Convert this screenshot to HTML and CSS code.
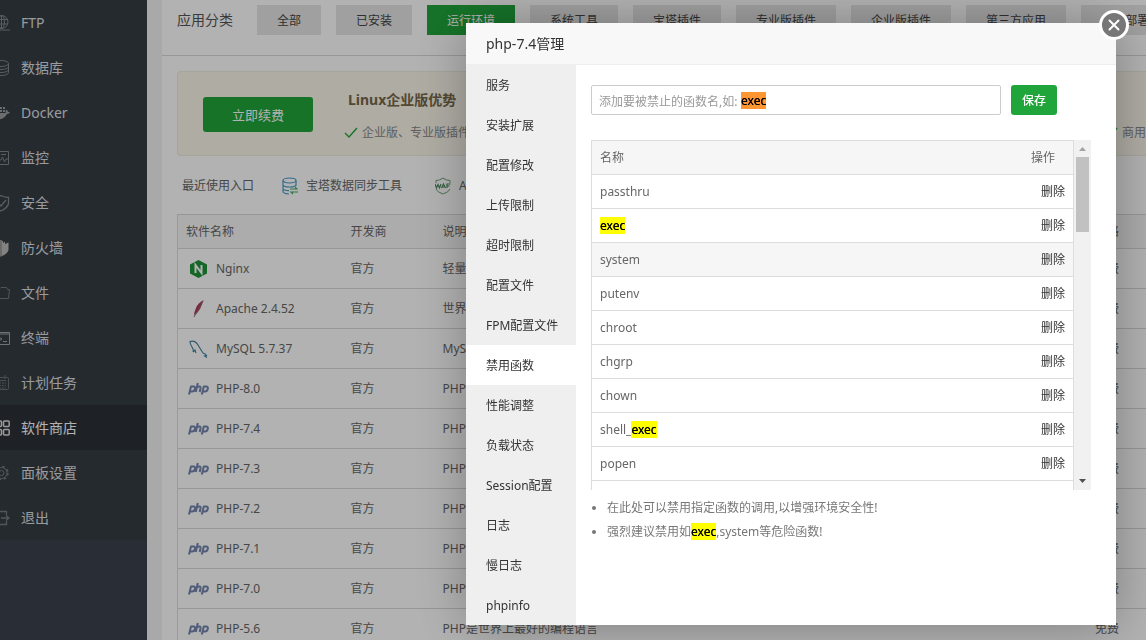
FILE: index.html
```html
<!DOCTYPE html>
<html lang="zh-CN">
<head>
<meta charset="utf-8">
<title>软件商店</title>
<link rel="stylesheet" href="styles.css">
</head>
<body>
<svg class="defs" aria-hidden="true">
  <symbol id="php" viewBox="0 0 21 12">
    <g fill="none" stroke="#7385ae" stroke-width="2" stroke-linejoin="round">
      <path d="M1 11.500L3 3.500H5.500Q7.500 3.500 7 5.800Q6.500 8.500 4 8.500H2"/>
      <path d="M9.800 0L7.800 9M9 4Q13 2.500 12.600 5L11.700 9"/>
      <path d="M13.800 11.500L15.800 3.500H18Q20.300 3.500 19.800 5.800Q19.300 8.500 16.800 8.500H14.800"/>
    </g>
  </symbol>
  <symbol id="check" viewBox="0 0 14 12"><path d="M1 6l4 4 8-9" fill="none" stroke="#20a53a" stroke-width="1.400"/></symbol>
</svg>

<div class="app">
  <nav class="sidebar">
    <a class="nav-item" href="#"><svg class="nav-icon" viewBox="8 0 10 18"><g fill="none" stroke="#81868b"><circle cx="9.500" cy="8" r="6.500"/><ellipse cx="9.500" cy="8" rx="3" ry="6.500"/><path d="M3 5.500h13M3 10h13M9.500 1v14M0 16h18"/></g></svg>FTP</a>
    <a class="nav-item" href="#"><svg class="nav-icon" viewBox="8 0 10 18"><g fill="none" stroke="#81868b"><ellipse cx="9" cy="4.500" rx="7.500" ry="3"/><path d="M16.500 4.500v9c0 4-15 4-15 0v-9M16.500 7.500c0 4-15 4-15 0M16.500 10.500c0 4-15 4-15 0"/></g></svg>数据库</a>
    <a class="nav-item" href="#"><svg class="nav-icon" viewBox="8 0 10 18"><g fill="#9a9da0"><path d="M0 9h14q-1-2 .5-3.500 1.500 1 1.500 2.500 1-.4 2 .2-.7 1.800-3 1.800Q12 15.500 6 15.500 0 15 0 9z"/><path d="M5 6h2v2H5zM8 6h2v2H8zM11 6h2v2h-2zM8 3h2v2H8zM11 3h2v2h-2z"/></g></svg>Docker</a>
    <a class="nav-item" href="#"><svg class="nav-icon" viewBox="8 0 10 18"><g fill="none" stroke="#81868b"><path d="M1 2.500h15.500v13H1zM9 5.500h5M5 11h4l1.500-3 2 5 1.500-3h2"/></g></svg>监控</a>
    <a class="nav-item" href="#"><svg class="nav-icon" viewBox="8 0 10 18"><g fill="none" stroke="#81868b" stroke-width="1.300"><path d="M9 1.500q3.500 2 7.500 2v6q-1 4.500-7.500 7.500-6-3-7-7.500v-6q4 0 7-2z"/><path d="M5 8l4 4 5-6"/></g></svg>安全</a>
    <a class="nav-item" href="#"><svg class="nav-icon" viewBox="8 0 10 18"><path d="M9 1l2 1.500V4l2-1.500V5l3.500-1.500V11q-1 4-7.500 6.500Q1 15 1 10V4z" fill="#bbb"/><path d="M9 2v15" stroke="#777"/></svg>防火墙</a>
    <a class="nav-item" href="#"><svg class="nav-icon" viewBox="8 0 10 18"><path d="M1 14.500V4.500h7l1-1h5.500l1 2H17.500l-1 9H1z" fill="none" stroke="#74797e"/></svg>文件</a>
    <a class="nav-item" href="#"><svg class="nav-icon" viewBox="8 0 10 18"><g fill="none" stroke="#a0a3a5"><path d="M0 3.500h17.500v12H0zM0 5h17.500M6 7.500l4 2.500-4 2.500M11 12.500h4"/></g></svg>终端</a>
    <a class="nav-item" href="#"><svg class="nav-icon" viewBox="8 0 10 18"><g fill="none" stroke="#697076"><rect x="1" y="3.500" width="15.500" height="12" rx="1"/><path d="M5 1v4M13 1v4M4 6.500h10"/><path d="M4 9h10M4 11.500h10M4 14h10" stroke-dasharray="2 1"/></g></svg>计划任务</a>
    <a class="nav-item active" href="#"><svg class="nav-icon" viewBox="8 0 10 18"><g fill="none" stroke="#ddd" stroke-width="1.500"><rect x="3" y="2" width="6.500" height="5.500" rx="1"/><rect x="11.500" y="2" width="5.700" height="5.500" rx="1"/><rect x="3" y="10.500" width="6.500" height="5.500" rx="1"/><rect x="11.500" y="10.500" width="5.700" height="5.500" rx="1"/></g></svg>软件商店</a>
    <a class="nav-item" href="#"><svg class="nav-icon" viewBox="8 0 10 18"><g fill="none" stroke="#777c80"><circle cx="9.500" cy="9" r="2.500"/><circle cx="9.500" cy="9" r="5.500"/><circle cx="9.500" cy="9" r="6.500" stroke-dasharray="2.500 2.600" stroke-width="1.500"/></g></svg>面板设置</a>
    <a class="nav-item" href="#"><svg class="nav-icon" viewBox="8 0 10 18"><path d="M14.500 6V2.500H1v13h13.500V12M9 9h8M14 6.500L17 9l-3 2.500" fill="none" stroke="#777c80" stroke-width="1.300"/></svg>退出</a>
  </nav>

  <main class="store">
    <header class="category-bar">
      <span class="category-title">应用分类</span>
      <button class="category">全部</button>
      <button class="category">已安装</button>
      <button class="category selected">运行环境</button>
      <button class="category">系统工具</button>
      <button class="category">宝塔插件</button>
      <button class="category">专业版插件</button>
      <button class="category">企业版插件</button>
      <button class="category">第三方应用</button>
      <button class="category">一键部署</button>
    </header>

    <section class="banner">
      <button class="renew">立即续费</button>
      <div class="banner-text">
        <h2 class="banner-title">Linux企业版优势</h2>
        <ul class="features">
          <li class="feature wide"><svg class="check"><use href="#check"/></svg>企业版、专业版插件</li>
          <li class="feature last"><svg class="check"><use href="#check"/></svg>商用</li>
        </ul>
      </div>
    </section>

    <section class="recent">
      <span class="recent-title">最近使用入口</span>
      <a class="recent-link" href="#"><svg class="recent-icon" viewBox="0 0 16 18"><g fill="none" stroke="#4b9cc9" stroke-width="1.200"><ellipse cx="7.500" cy="3.500" rx="6.500" ry="2.500"/><path d="M1 3.500v11q0 2 6 2.500M14 3.500V9M1 7.500q0 2.500 6.500 2.500T14 7.500M1 11.500q0 2 6 2.200"/></g><path d="M8 12h7l-2-2M16 15H9l2 2" fill="none" stroke="#40ad60" stroke-width="1.200"/></svg>宝塔数据同步工具</a>
      <a class="recent-link waf" href="#"><svg class="recent-icon" viewBox="0 0 16 18"><path d="M1 6V3.500q4 0 7-2.500 3 2.500 7 2.500V6M1 12q1 3 7 5 6-2 7-5" fill="none" stroke="#6f9f7b"/><path d="M0 7l1.500 4L3 7.500 4.500 11 6 7M6.500 11l2-4 2 4M7.500 10h2M12 11V7H15.500M12 9H14.500" fill="none" stroke="#4d8a5e" stroke-width="1.200"/></svg>A</a>
    </section>

    <table class="software">
      <thead><tr><th class="col-name">软件名称</th><th class="col-dev">开发商</th><th>说明</th><th class="col-price">价格</th></tr></thead>
      <tbody>
        <tr><td><span class="soft"><svg class="soft-icon" viewBox="0 0 21 20"><path d="M10.500 1L19 5.500v9L10.500 19 2 14.500v-9z" fill="#1e9437"/><path d="M7.500 14V6l6 8V6" fill="none" stroke="#fff" stroke-width="2"/></svg>Nginx</span></td><td>官方</td><td>轻量级，占有内存少</td><td class="col-price">免费</td></tr>
        <tr><td><span class="soft"><svg class="soft-icon" viewBox="0 0 21 20"><path d="M15.500 1Q10 4 8 9t-2 7q4-2 6-6t3.500-9z" fill="#b3365a"/><path d="M15 2L6 18" stroke="#84706b"/></svg>Apache 2.4.52</span></td><td>官方</td><td>世界排名第一</td><td class="col-price">免费</td></tr>
        <tr><td><span class="soft"><svg class="soft-icon" viewBox="0 0 21 20"><path d="M5 13q1-2-1-5T2 2.500Q7 1 10 6t5 8q3 1 3.500 2.500l-2 .5 2.500 1.500M5 13l2-2 1 3" fill="none" stroke="#407e9f" stroke-width="1.100"/></svg>MySQL 5.7.37</span></td><td>官方</td><td>MySQL是一种关系数据库</td><td class="col-price">免费</td></tr>
        <tr><td><span class="soft"><svg class="soft-icon"><use href="#php"/></svg>PHP-8.0</span></td><td>官方</td><td>PHP是世界上最好的编程语言</td><td class="col-price">免费</td></tr>
        <tr><td><span class="soft"><svg class="soft-icon"><use href="#php"/></svg>PHP-7.4</span></td><td>官方</td><td>PHP是世界上最好的编程语言</td><td class="col-price">免费</td></tr>
        <tr><td><span class="soft"><svg class="soft-icon"><use href="#php"/></svg>PHP-7.3</span></td><td>官方</td><td>PHP是世界上最好的编程语言</td><td class="col-price">免费</td></tr>
        <tr><td><span class="soft"><svg class="soft-icon"><use href="#php"/></svg>PHP-7.2</span></td><td>官方</td><td>PHP是世界上最好的编程语言</td><td class="col-price">免费</td></tr>
        <tr><td><span class="soft"><svg class="soft-icon"><use href="#php"/></svg>PHP-7.1</span></td><td>官方</td><td>PHP是世界上最好的编程语言</td><td class="col-price">免费</td></tr>
        <tr><td><span class="soft"><svg class="soft-icon"><use href="#php"/></svg>PHP-7.0</span></td><td>官方</td><td>PHP是世界上最好的编程语言</td><td class="col-price">免费</td></tr>
        <tr><td><span class="soft"><svg class="soft-icon"><use href="#php"/></svg>PHP-5.6</span></td><td>官方</td><td>PHP是世界上最好的编程语言</td><td class="col-price">免费</td></tr>
      </tbody>
    </table>
  </main>
</div>

<div class="overlay"></div>

<div class="modal" role="dialog" aria-labelledby="modal-title">
  <h1 class="modal-title" id="modal-title">php-7.4管理</h1>
  <button class="close" aria-label="关闭"><svg class="close-icon" viewBox="0 0 12 12"><path d="M1.500 1.500l9 9M10.500 1.500l-9 9" stroke="#fff" stroke-width="2" stroke-linecap="round"/></svg></button>
  <div class="modal-body">
    <nav class="tabs">
      <a class="tab" href="#">服务</a>
      <a class="tab" href="#">安装扩展</a>
      <a class="tab" href="#">配置修改</a>
      <a class="tab" href="#">上传限制</a>
      <a class="tab" href="#">超时限制</a>
      <a class="tab" href="#">配置文件</a>
      <a class="tab" href="#">FPM配置文件</a>
      <a class="tab current" href="#">禁用函数</a>
      <a class="tab" href="#">性能调整</a>
      <a class="tab" href="#">负载状态</a>
      <a class="tab" href="#">Session配置</a>
      <a class="tab" href="#">日志</a>
      <a class="tab" href="#">慢日志</a>
      <a class="tab" href="#">phpinfo</a>
    </nav>
    <section class="panel">
      <form class="add-form">
        <div class="field">
          <input class="function-input" id="fn" type="text" aria-label="要被禁止的函数名" placeholder="添加要被禁止的函数名,如:">
          <label class="field-hint" for="fn"><mark class="found">exec</mark></label>
        </div>
        <button class="save" type="button">保存</button>
      </form>
      <div class="list">
        <div class="list-view">
          <table class="functions">
            <thead><tr><th>名称</th><th class="action-head">操作</th></tr></thead>
            <tbody>
              <tr><td>passthru</td><td class="action"><a class="remove" href="#">删除</a></td></tr>
              <tr><td><mark>exec</mark></td><td class="action"><a class="remove" href="#">删除</a></td></tr>
              <tr class="hover"><td>system</td><td class="action"><a class="remove" href="#">删除</a></td></tr>
              <tr><td>putenv</td><td class="action"><a class="remove" href="#">删除</a></td></tr>
              <tr><td>chroot</td><td class="action"><a class="remove" href="#">删除</a></td></tr>
              <tr><td>chgrp</td><td class="action"><a class="remove" href="#">删除</a></td></tr>
              <tr><td>chown</td><td class="action"><a class="remove" href="#">删除</a></td></tr>
              <tr><td>shell_<mark>exec</mark></td><td class="action"><a class="remove" href="#">删除</a></td></tr>
              <tr><td>popen</td><td class="action"><a class="remove" href="#">删除</a></td></tr>
              <tr><td></td><td></td></tr>
            </tbody>
          </table>
        </div>
        <div class="scrollbar" aria-hidden="true">
          <svg class="arrow" viewBox="0 0 17 17"><path d="M5 11h7L8.500 7z" fill="#a3a3a3"/></svg>
          <div class="thumb"></div>
          <svg class="arrow down" viewBox="0 0 17 17"><path d="M5 6h7L8.500 10z" fill="#505050"/></svg>
        </div>
      </div>
      <ul class="tips">
        <li>在此处可以禁用指定函数的调用,以增强环境安全性!</li>
        <li>强烈建议禁用如<mark>exec</mark>,system等危险函数!</li>
      </ul>
    </section>
  </div>
</div>
</body>
</html>
```

FILE: styles.css
```css
* {
  box-sizing: border-box;
}

html,
body {
  height: 100%;
}

body {
  margin: 0;
  overflow: hidden;
  background: #f2f2f2;
  color: #666;
  font-family: "Noto Sans", "Noto Sans CJK SC", sans-serif;
  font-size: 12px;
  line-height: 16px;
}

a {
  color: inherit;
  text-decoration: none;
}

button,
input {
  margin: 0;
  font: inherit;
}

ul {
  margin: 0;
  padding: 0;
}

table {
  width: 100%;
  border-collapse: collapse;
}

th {
  font-weight: normal;
  text-align: left;
}

mark {
  background: #ff0;
  color: #000;
  text-shadow: 0 0 0 #000;
}

.defs {
  position: absolute;
  width: 0;
  height: 0;
}

.app {
  display: flex;
  gap: 15px;
  height: 100%;
  overflow: hidden;
}

/* Left navigation */
.sidebar {
  flex: 0 0 147px;
  background: #3c424e;
}

.nav-item {
  display: flex;
  align-items: center;
  gap: 11px;
  height: 45px;
  background: #363d44;
  color: #dcdfe1;
  font-size: 14px;
}

.nav-item.active {
  background: #2c3137;
  color: #fff;
}

.nav-icon {
  width: 10px;
  height: 18px;
}

/* Store page */
.store {
  flex: 1;
  min-width: 0;
  background: #fff;
}

.category-bar {
  display: flex;
  align-items: center;
  gap: 15px;
  height: 56px;
  padding: 0 0 16px 15px;
  border-bottom: 1px solid #d8d8d8;
}

.category-title {
  flex: none;
  width: 65px;
  color: #555;
  font-size: 14px;
}

.category {
  flex: none;
  height: 30px;
  padding: 2px 20px 0;
  border: 0;
  background: #e6e6e6;
  color: #444;
}

.category.selected {
  background: #20a53a;
  color: #fff;
}

.banner {
  display: flex;
  align-items: center;
  gap: 31px;
  height: 85px;
  margin: 15px 0 0 15px;
  padding: 2px 0 0 25px;
  border: 1px solid #efebdc;
  border-right: 0;
  border-radius: 4px 0 0 4px;
  background: #fbf7eb;
}

.renew {
  flex: none;
  width: 110px;
  height: 35px;
  border: 0;
  border-radius: 3px;
  background: #20a53a;
  color: #fff;
  font-size: 13px;
}

.banner-text {
  flex: 1;
}

.banner-title {
  margin: 2px 0 16px 4px;
  color: #776749;
  font-size: 14px;
  line-height: 18px;
}

.features {
  display: flex;
  list-style: none;
}

.feature {
  display: flex;
  align-items: center;
  gap: 4px;
  color: #888;
  white-space: nowrap;
}

.wide {
  flex: 1;
}

.last {
  width: 42px;
}

.check {
  flex: none;
  width: 14px;
  height: 12px;
}

.recent {
  display: flex;
  align-items: center;
  height: 58px;
  padding: 2px 0 0 20px;
}

.recent-link {
  display: flex;
  align-items: center;
  gap: 8px;
  margin-left: 28px;
}

.recent-link.waf {
  margin-left: 33px;
}

.recent-icon {
  width: 16px;
  height: 18px;
}

.software {
  margin-left: 15px;
  table-layout: fixed;
  border-left: 1px solid #ddd;
}

.software th,
.software td {
  height: 40px;
  padding: 0 8px;
  border-top: 1px solid #d8d8d8;
}

.software th {
  height: 34px;
  background: #f6f6f6;
}

.col-name {
  width: 165px;
}

.col-dev {
  width: 92px;
}

.software .col-price {
  width: 80px;
  padding-right: 42px;
  text-align: right;
}

.soft {
  display: flex;
  align-items: center;
  gap: 7px;
  padding-left: 2px;
}

.soft-icon {
  width: 21px;
  height: 20px;
}

.overlay {
  position: fixed;
  inset: 0;
  background: rgba(0, 0, 0, 0.3);
}

/* Management dialog */
.modal {
  position: fixed;
  top: 23px;
  right: 30px;
  width: 650px;
  background: #fff;
  box-shadow: 1px 1px 50px rgba(0, 0, 0, 0.3);
}

.modal-title {
  margin: 0;
  padding: 0 20px;
  border-bottom: 1px solid #eee;
  background: #f8f8f8;
  color: #333;
  font-size: 14px;
  font-weight: normal;
  line-height: 41px;
}

.close {
  position: absolute;
  top: -13px;
  right: -13px;
  display: flex;
  align-items: center;
  justify-content: center;
  width: 30px;
  height: 30px;
  padding: 0;
  border: 3px solid #fff;
  border-radius: 50%;
  background: #777;
}

.close-icon {
  width: 12px;
  height: 12px;
}

.modal-body {
  display: flex;
}

.tabs {
  flex: 0 0 110px;
  background: #efefef;
}

.tab {
  display: block;
  padding: 2px 0 0 20px;
  color: #333;
  line-height: 38px;
}

.tab.current {
  background: #fff;
}

.panel {
  flex: 1;
  padding: 20px 25px 0 15px;
}

.add-form {
  display: flex;
  gap: 10px;
  margin: 0 34px 25px 0;
}

.field {
  position: relative;
  flex: 1;
}

.function-input {
  width: 100%;
  height: 30px;
  padding: 2px 7px 0;
  border: 1px solid #ccc;
  border-radius: 2px;
}

.function-input::placeholder {
  color: #999;
}

.field-hint {
  position: absolute;
  top: 8px;
  left: 150px;
}

.found {
  background: #ff9632;
}

.save {
  width: 46px;
  height: 30px;
  padding: 2px 0 0;
  border: 0;
  border-radius: 3px;
  background: #20a53a;
  color: #fff;
  font-weight: 500;
}

.list {
  display: flex;
  height: 350px;
}

.list-view {
  flex: 1;
  overflow: hidden;
}

.functions {
  border: 1px solid #ddd;
}

.functions th,
.functions td {
  height: 34px;
  padding: 0 8px;
  border-bottom: 1px solid #ddd;
}

.functions th,
.functions .hover {
  background: #f6f6f6;
}

.functions .action,
.functions .action-head {
  text-align: right;
}

.functions .action-head {
  padding-right: 18px;
}

.remove {
  color: #333;
}

.scrollbar {
  display: flex;
  flex-direction: column;
  width: 17px;
  background: #f1f1f1;
}

.arrow {
  width: 17px;
  height: 17px;
}

.thumb {
  height: 75px;
  margin: 0 2px;
  background: #c1c1c1;
}

.down {
  margin-top: auto;
}

.tips {
  padding: 6px 0 0 16px;
  color: #777;
  line-height: 24px;
}
```
